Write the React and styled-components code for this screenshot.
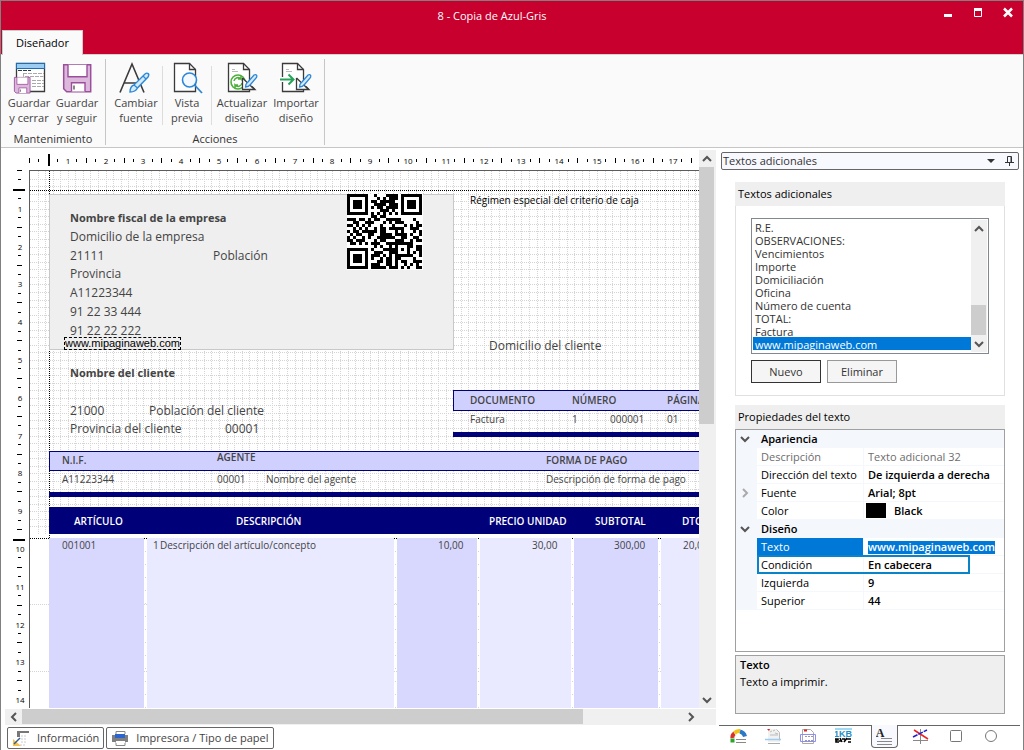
import React, { useEffect, useRef, useState } from "react";
import styled, { createGlobalStyle, css } from "styled-components";

const GlobalStyle = createGlobalStyle`
    * {
        box-sizing: border-box;
    }
    body {
        margin: 0;
        background: #fff;
        color: #333;
        font-family: "Open Sans", "Noto Sans", sans-serif;
        font-size: 11px;
        line-height: 16px;
    }
    button, input, select {
        font: inherit;
        color: inherit;
    }
`

const CM = 37.8;

const qrRows = [
    "1111111001000111101111111",
    "1000001000101011101000001",
    "1011101011011111001011101",
    "1011101001111011101011101",
    "1011101010110111101011101",
    "1000001000011101001000001",
    "1111111010101010101111111",
    "0000000011011000000000000",
    "1110110101100111110000100",
    "0011001110001010111000010",
    "1101010100010001000101011",
    "0010101001011011111001110",
    "1011011111011000101000101",
    "0101100110011110111101001",
    "1010010100111111001100110",
    "1101110001011000111001011",
    "0110101011100111111111000",
    "0000000001010010100011011",
    "1111111010001111101010011",
    "1000001001110011100010101",
    "1011101011101010111111001",
    "1011101010010110110000100",
    "1011101000110110101100111",
    "1000001011100110100101010",
    "1111111011111011101010011",
];

// x, y: coordenadas sobre el papel
const boxes = [
    { x: 19, y: 23, w: 405, h: 156, kind: "panel" },
    { x: 423, y: 219, w: 400, h: 21, kind: "band" },
    { x: 423, y: 261, w: 400, h: 5, kind: "solid" },
    { x: 19, y: 280, w: 800, h: 20, kind: "band" },
    { x: 19, y: 321, w: 800, h: 5, kind: "solid" },
    { x: 19, y: 336, w: 800, h: 27, kind: "solid" },
    { x: 19, y: 367, w: 95, h: 600, kind: "dark" },
    { x: 117, y: 367, w: 247, h: 600, kind: "light" },
    { x: 367, y: 367, w: 80, h: 600, kind: "dark" },
    { x: 450, y: 367, w: 91, h: 600, kind: "light" },
    { x: 544, y: 367, w: 84, h: 600, kind: "dark" },
    { x: 631, y: 367, w: 91, h: 600, kind: "light" },
];

const texts = [
    { x: 40, y: 39, t: "Nombre fiscal de la empresa", bold: true },
    { x: 40, y: 58, t: "Domicilio de la empresa" },
    { x: 40, y: 77, t: "21111" },
    { x: 183, y: 77, t: "Población" },
    { x: 40, y: 95, t: "Provincia" },
    { x: 40, y: 114, t: "A11223344" },
    { x: 40, y: 133, t: "91 22 33 444" },
    { x: 40, y: 152, t: "91 22 22 222" },
    { x: 440, y: 21, t: "Régimen especial del criterio de caja", small: true, color: "#000" },
    { x: 459, y: 167, t: "Domicilio del cliente" },
    { x: 40, y: 194, t: "Nombre del cliente", bold: true },
    { x: 40, y: 232, t: "21000" },
    { x: 119, y: 232, t: "Población del cliente" },
    { x: 40, y: 250, t: "Provincia del cliente" },
    { x: 195, y: 250, t: "00001" },
    { x: 440, y: 221, t: "DOCUMENTO", small: true, bold: true },
    { x: 542, y: 221, t: "NÚMERO", small: true, bold: true },
    { x: 637, y: 221, t: "PÁGINA", small: true, bold: true },
    { x: 440, y: 240, t: "Factura", small: true },
    { x: 542, y: 240, t: "1", small: true },
    { x: 580, y: 240, t: "000001", small: true },
    { x: 637, y: 240, t: "01", small: true },
    { x: 32, y: 281, t: "N.I.F.", small: true, bold: true },
    { x: 187, y: 278, t: "AGENTE", small: true, bold: true },
    { x: 516, y: 281, t: "FORMA DE PAGO", small: true, bold: true },
    { x: 32, y: 300, t: "A11223344", small: true },
    { x: 187, y: 300, t: "00001", small: true },
    { x: 236, y: 300, t: "Nombre del agente", small: true },
    { x: 516, y: 300, t: "Descripción de forma de pago", small: true },
    { x: 44, y: 342, t: "ARTÍCULO", small: true, bold: true, color: "#fff" },
    { x: 206, y: 342, t: "DESCRIPCIÓN", small: true, bold: true, color: "#fff" },
    { x: 459, y: 342, t: "PRECIO UNIDAD", small: true, bold: true, color: "#fff" },
    { x: 565, y: 342, t: "SUBTOTAL", small: true, bold: true, color: "#fff" },
    { x: 652, y: 342, t: "DTO.", small: true, bold: true, color: "#fff" },
    { x: 32, y: 366, t: "001001", small: true },
    { x: 123, y: 366, t: "1", small: true },
    { x: 130, y: 366, t: "Descripción del artículo/concepto", small: true },
    { x: 408, y: 366, t: "10,00", small: true },
    { x: 502, y: 366, t: "30,00", small: true },
    { x: 584, y: 366, t: "300,00", small: true },
    { x: 653, y: 366, t: "20,00", small: true },
];

const listItems = [
    "R.E.", "OBSERVACIONES:", "Vencimientos", "Importe", "Domiciliación",
    "Oficina", "Número de cuenta", "TOTAL:", "Factura", "www.mipaginaweb.com",
];

// tamaño visible de un elemento
function useSize() {
    const ref = useRef(null);
    const [size, setSize] = useState({ width: 0, height: 0 });

    useEffect(() => {
        const observer = new ResizeObserver(([entry]) => {
            setSize({ width: entry.contentRect.width, height: entry.contentRect.height });
        });
        observer.observe(ref.current);
        return () => observer.disconnect();
    }, []);

    return [ref, size];
}

/* ---------- iconos ---------- */

const Chevron = ({ dir, color = "#555" }) => {
    const d = {
        up: "M1 7 L5 3 L9 7",
        down: "M1 3 L5 7 L9 3",
        left: "M7 1 L3 5 L7 9",
        right: "M3 1 L7 5 L3 9",
    }[dir];
    return (
        <svg width="10" height="10" viewBox="0 0 10 10">
            <path d={d} fill="none" stroke={color} strokeWidth="2" />
        </svg>
    )
}

const Floppy = () => (
    <>
        <path d="M.7.7h27v27h-24l-3-3z" fill="#dcb8dc" stroke="#9b4f9b" strokeWidth="1.500" />
        <path d="M5 .7v12h19V.7M8.500 27.500v-8.800h13.500v8.800" fill="#fff" stroke="#9b4f9b" strokeWidth="1.400" />
        <path d="M11 21.500v4" stroke="#555" strokeWidth="1.400" />
    </>
)

const Page = () => (
    <>
        <path d="M5.500 2.500h15l6 6v22h-21z" fill="#fff" stroke="#3b3b3b" strokeWidth="1.300" />
        <path d="M20.500 2.500v6h6" fill="none" stroke="#3b3b3b" strokeWidth="1.300" />
    </>
)

const PenSquare = () => (
    <>
        <path d="M18.500 17v11.500H31l-3-3" fill="#fff" stroke="#3b3b3b" strokeWidth="1.300" />
        <path d="M18.500 17l12 11.500" stroke="#3b3b3b" strokeWidth="1.300" />
        <path d="M21.500 26c0-3 1-4 2.500-5l6-7c2-1 3.500 0 2.500 2.500l-6 7c-1.500 2-3 2.500-5 2.500z" fill="#d5eafa" stroke="#2b88d8" strokeWidth="1.300" />
    </>
)

const IconSaveClose = () => (
    <svg width="34" height="34" viewBox="0 0 34 34">
        <path d="M4.500 2.500h28v28h-28z" fill="#fff" stroke="#3b3b3b" strokeWidth="1.300" />
        <path d="M4.500 2.500h28v5h-28z" fill="#9bcdf2" stroke="#1b6fb8" />
        <path d="M6 9.500h4m1 0h4m1 0h3" stroke="#3b3b3b" />
        <path d="M11 12.500h21M11.500 12v3.500h20M20 19.500h12M20 22.500h12M20 25.500h12" fill="none" stroke="#aaa" strokeDasharray="4 1" />
        <g transform="translate(2 16) scale(.58)"><Floppy /></g>
    </svg>
)

const IconSave = () => (
    <svg width="34" height="34" viewBox="0 0 34 34">
        <g transform="translate(3 3)"><Floppy /></g>
    </svg>
)

const IconFont = () => (
    <svg width="34" height="34" viewBox="0 0 34 34">
        <path d="M1 31.500L13 3L25 31.500M5.500 22H21" fill="none" stroke="#3b3b3b" strokeWidth="1.600" />
        <path d="M11 31c0-4 1-6 4-7L26 13c2.500-2 5 0 3 3L18.500 27c-1.500 3-4 4-7.500 4z" fill="#d5eafa" stroke="#2b88d8" strokeWidth="1.400" />
        <path d="M15 24l3.500 3M24 15l3 3" stroke="#2b88d8" strokeWidth="1.200" />
    </svg>
)

const IconPreview = () => (
    <svg width="34" height="34" viewBox="0 0 34 34">
        <g transform="translate(-1 0)"><Page /></g>
        <circle cx="19.500" cy="19" r="7" fill="#f3f9fe" stroke="#2b88d8" strokeWidth="1.600" />
        <path d="M24.500 24l7.500 8" stroke="#2b88d8" strokeWidth="1.800" />
    </svg>
)

const IconRefresh = () => (
    <svg width="34" height="34" viewBox="0 0 34 34">
        <g transform="translate(-2 0)"><Page /></g>
        <path d="M7 8.500h3m-3 2h6" stroke="#bbb" />
        <circle cx="13" cy="21" r="7" fill="#fff" stroke="#4caf3c" strokeWidth="1.600" />
        <path d="M9 20a4 4 0 0 1 7-2v-3M16 18h-3M17 22a4 4 0 0 1-7 2v3M10 24h3" fill="none" stroke="#4caf3c" strokeWidth="1.500" />
        <g transform="translate(-1 0)"><PenSquare /></g>
    </svg>
)

const IconImport = () => (
    <svg width="34" height="34" viewBox="0 0 34 34">
        <g transform="translate(-2 0)"><Page /></g>
        <path d="M7 8.500h3m-3 2h6" stroke="#bbb" />
        <path d="M0 18.500h14" stroke="#fff" strokeWidth="5" />
        <path d="M1 18.500h13M9.500 13.500l5 5l-5 5" fill="none" stroke="#27a35a" strokeWidth="2" />
        <g transform="translate(-1 0)"><PenSquare /></g>
    </svg>
)

const IconInfo = () => (
    <svg width="18" height="18" viewBox="0 0 18 18">
        <path d="M5 2h12v2H8v4H5z" fill="#777" />
        <path d="M9 7h5m-5 3h5m-5 3h5M8 16h6" stroke="#ccc" strokeDasharray="2 1" />
        <path d="M1 10v7h8z" fill="#f6bf4f" />
        <path d="M2 15l6-6" stroke="#2f5f8f" strokeWidth="1.500" />
    </svg>
)

const IconPrinter = () => (
    <svg width="18" height="18" viewBox="0 0 18 18">
        <path d="M5 5V2.500h9V5M5 13v3.500h9V13" fill="#fff" stroke="#888" />
        <path d="M1 6h16v7H1z" fill="#808080" />
        <path d="M4 5h10v4H4z" fill="#2c63cf" />
        <path d="M5 12h9v2H5z" fill="#fff" />
    </svg>
)

const tabIcons = {
    Colores: (
        <>
            <path d="M2.500 14.500v-4" stroke="#2aa52a" strokeWidth="4" />
            <path d="M2.500 10Q2 7 4.500 5.500" stroke="#d9302a" strokeWidth="4" fill="none" />
            <path d="M4.500 5Q7 2.500 10 3" stroke="#f2c313" strokeWidth="4" fill="none" />
            <path d="M10 3.500q4 1 5 5" stroke="#2a78c8" strokeWidth="4" fill="none" />
            <path d="M6 11.500h10M6 14.500h10" stroke="#888" />
        </>
    ),
    Pie: (
        <>
            <path d="M3 1h9l3 3v10H3z" fill="#f1f1f1" />
            <path d="M2 1h3l-1 2z" fill="#d22" />
            <path d="M5 4l2-1M8 3l2-1M10 5l3 1M5 7h8" stroke="#bbb" />
            <path d="M11.500 1.500l3 3v8" fill="none" stroke="#bbb" />
            <path d="M0 11.500h16" stroke="#9fcdf0" strokeWidth="1.500" />
            <path d="M3 15.500h12" stroke="#aaa" />
        </>
    ),
    Documento: (
        <>
            <path d="M2.500 1.500h8l3 3v11h-11z" fill="#fff" stroke="#aaa" />
            <path d="M4 2.500h3" stroke="#d22" strokeWidth="2" />
            <path d="M5 8.500h8M5 12.500h8" stroke="#999" strokeDasharray="2 1" />
            <path d="M.500 6.500h15v7H.500z" fill="none" stroke="#8d8df5" />
        </>
    ),
    Variables: (
        <>
            <path d="M0 1h17" stroke="#41b4e6" />
            <text x="8" y="9" textAnchor="middle" fontFamily="Liberation Sans" fontWeight="700" fontSize="9" fill="#1f8fc4">1KB</text>
            <path d="M0 11h3v1H1v2h3M5 10l2 4M7 11h3M9 14l3-4M12 11h4M13 14h3M4 13h2" stroke="#000" strokeWidth="1.600" fill="none" />
        </>
    ),
    Textos: (
        <>
            <text x="4" y="9" textAnchor="middle" fontFamily="Liberation Serif" fontWeight="700" fontSize="12" fill="#222">A</text>
            <path d="M5 10.500h11M1 13.500h15M1 16.500h15" stroke="#888" />
        </>
    ),
    Lineas: (
        <>
            <path d="M8.500 1v15M1 12.500h15" stroke="#888" />
            <path d="M2 2l14 9" stroke="#e22" strokeWidth="1.500" />
            <path d="M1 9L15 2" stroke="#22c" strokeWidth="1.500" strokeDasharray="5 1" />
        </>
    ),
    Cuadros: <rect x="3.500" y="2.500" width="11" height="11" rx="1" fill="#fff" stroke="#777" />,
    Circulos: <circle cx="9" cy="8" r="5.500" fill="#fff" stroke="#777" />,
};

/* ---------- reglas y papel ---------- */

const HRuler = () => {
    const [ref, size] = useSize();
    const marks = [];
    for (let q = 0; q * CM / 4 < size.width - 8; q++) {
        const x = Math.round(q * CM / 4);
        if (q % 4 === 0 && q > 0) {
            marks.push(<text key={q} x={x + 1} y="16" textAnchor="middle" fontSize="8">{q / 4}</text>);
        } else if (q === 2) {
            marks.push(<rect key={q} x={x} y="6" width="2" height="12" />);
        } else {
            const tall = q % 2 === 0;
            marks.push(<rect key={q} x={x} y={tall ? 10 : 11} width="1" height={tall ? 5 : 3} />);
        }
    }
    return <RulerCell ref={ref}><RulerSvg width="100%" height="22">{marks}</RulerSvg></RulerCell>
}

const VRuler = () => {
    const [ref, size] = useSize();
    const marks = [];
    for (let q = 0; q * CM / 4 < size.height - 4; q++) {
        const y = Math.round(q * CM / 4);
        if (q % 4 === 0 && q > 0) {
            marks.push(<text key={q} x="19" y={y + 4} textAnchor="middle" fontSize="8">{q / 4}</text>);
        } else if (q === 2 || q === 39) {
            marks.push(<rect key={q} x="12" y={y} width="12" height="2" />);
        } else {
            const tall = q % 2 === 0;
            marks.push(<rect key={q} x={tall ? 16 : 17} y={y} width={tall ? 5 : 3} height="1" />);
        }
    }
    return <RulerCell ref={ref}><RulerSvg width="28" height="100%">{marks}</RulerSvg></RulerCell>
}

const PaperGrid = () => {
    const lines = [];
    for (let i = 1; i < 150; i++) {
        const p = Math.round(i * CM / 5) + 0.5;
        lines.push(<path key={"v" + i} d={`M${p} 0V363`} />);
        if (p < 363) lines.push(<path key={"h" + i} d={`M0 ${p}H1200`} />);
    }
    for (let y = 433; y < 1000; y += 67) {
        lines.push(<path key={"b" + y} d={`M0 ${y}.5H1200`} />);
    }
    for (const x of [115, 365, 448, 542, 629]) {
        lines.push(<path key={"g" + x} d={`M${x}.5 380V1000`} strokeDasharray="1 12" />);
    }
    return (
        <GridSvg width="100%" height="100%">
            <g stroke="#d4d4d4" strokeDasharray="1 1">{lines}</g>
            <g stroke="#000" strokeDasharray="1 1">
                <path d="M0 19.5H1200" />
                <path d="M19.5 0V367" />
                <path d="M0 367.5H1200" />
            </g>
        </GridSvg>
    )
}

const QrCode = () => (
    <QrSvg width="76" height="76" viewBox="0 0 76 76">
        <rect width="76" height="76" fill="#fff" />
        {qrRows.map((row, r) => row.split("").map((c, i) => (
            c === "1" ? <rect key={r + "-" + i} x={i * 3} y={r * 3} width="3" height="3" /> : null
        )))}
    </QrSvg>
)

function RibbonAction({ icon, lines, size }) {
    return (
        <RibbonButton type="button" $size={size}>
            {icon}
            <span>{lines[0]}<br />{lines[1]}</span>
        </RibbonButton>
    )
}

function App() {
    const [selected, setSelected] = useState("www.mipaginaweb.com");
    const [texto, setTexto] = useState("www.mipaginaweb.com");

    return (
        <Window>
            <GlobalStyle />
            <TitleBar>
                <Title>8 - Copia de Azul-Gris</Title>
                <WindowButtons>
                    <WindowButton type="button" aria-label="Minimizar">
                        <svg width="12" height="12"><rect x="2" y="7" width="8" height="3" fill="#fff" /></svg>
                    </WindowButton>
                    <WindowButton type="button" aria-label="Maximizar">
                        <svg width="12" height="12"><path d="M2.500 2v7.500h7V2" fill="none" stroke="#fff" /><rect x="2" y="1" width="8" height="3" fill="#fff" /></svg>
                    </WindowButton>
                    <WindowButton type="button" aria-label="Cerrar">
                        <svg width="12" height="12"><path d="M2 1.500l8 8M10 1.500l-8 8" stroke="#fff" strokeWidth="2.500" /></svg>
                    </WindowButton>
                </WindowButtons>
            </TitleBar>
            <TabRow>
                <RibbonTab type="button">Diseñador</RibbonTab>
            </TabRow>
            <Ribbon>
                <RibbonGroup>
                    <RibbonActions>
                        <RibbonAction icon={<IconSaveClose />} lines={["Guardar", "y cerrar"]} />
                        <RibbonAction icon={<IconSave />} lines={["Guardar", "y seguir"]} />
                    </RibbonActions>
                    <RibbonCaption>Mantenimiento</RibbonCaption>
                </RibbonGroup>
                <RibbonGroup>
                    <RibbonActions>
                        <RibbonAction icon={<IconFont />} lines={["Cambiar", "fuente"]} size="medium" />
                        <Divider />
                        <RibbonAction icon={<IconPreview />} lines={["Vista", "previa"]} />
                        <Divider />
                        <RibbonAction icon={<IconRefresh />} lines={["Actualizar", "diseño"]} size="large" />
                        <RibbonAction icon={<IconImport />} lines={["Importar", "diseño"]} />
                    </RibbonActions>
                    <RibbonCaption>Acciones</RibbonCaption>
                </RibbonGroup>
            </Ribbon>

            <Main>
                <Editor>
                    <Workspace>
                        <Corner />
                        <HRuler />
                        <VRuler />
                        <Paper>
                            <PaperGrid />
                            {boxes.map((b, i) => (
                                <PaperBox key={i} $x={b.x} $y={b.y} $w={b.w} $h={b.h} $kind={b.kind} />
                            ))}
                            <QrCode />
                            {texts.map((t, i) => (
                                <PaperText key={i} $x={t.x} $y={t.y} $small={t.small} $bold={t.bold} $color={t.color}>{t.t}</PaperText>
                            ))}
                            <SelectedText $x={34} $y={166}>{texto}</SelectedText>
                        </Paper>
                        <VScroll>
                            <ScrollButton type="button" aria-label="Subir"><Chevron dir="up" /></ScrollButton>
                            <Track><VThumb /></Track>
                            <ScrollButton type="button" aria-label="Bajar"><Chevron dir="down" /></ScrollButton>
                        </VScroll>
                        <HScroll>
                            <ScrollButton type="button" aria-label="Izquierda"><Chevron dir="left" /></ScrollButton>
                            <Track><HThumb /></Track>
                            <ScrollButton type="button" aria-label="Derecha"><Chevron dir="right" /></ScrollButton>
                        </HScroll>
                    </Workspace>
                    <Footer>
                        <FooterButton type="button"><IconInfo />Información</FooterButton>
                        <FooterButton type="button"><IconPrinter />Impresora / Tipo de papel</FooterButton>
                    </Footer>
                </Editor>

                <Dock>
                    <DockBody>
                        <DockTitle>
                            <span>Textos adicionales</span>
                            <DockButton type="button" aria-label="Menú">
                                <svg width="8" height="6"><path d="M0 1h8l-4 4z" fill="#333" /></svg>
                            </DockButton>
                            <DockButton type="button" aria-label="Anclar">
                                <svg width="9" height="10"><path d="M2.500 6V.500h4V6M0 6.500h9M4.500 7v3" fill="none" stroke="#333" /><path d="M6 1v5" stroke="#333" /></svg>
                            </DockButton>
                        </DockTitle>
                        <Groups>
                            <GroupTitle as="label" htmlFor="textos">Textos adicionales</GroupTitle>
                            <GroupBody>
                                <ListFrame>
                                    <ListBox id="textos" size={10} value={selected} onChange={(e) => { setSelected(e.target.value) }}>
                                        {listItems.map((item) => <option key={item}>{item}</option>)}
                                    </ListBox>
                                    <ListScroll>
                                        <ScrollButton type="button" aria-label="Subir lista"><Chevron dir="up" /></ScrollButton>
                                        <ListTrack><ListThumb /></ListTrack>
                                        <ScrollButton type="button" aria-label="Bajar lista"><Chevron dir="down" /></ScrollButton>
                                    </ListScroll>
                                </ListFrame>
                                <Buttons>
                                    <PushButton type="button" $primary>Nuevo</PushButton>
                                    <PushButton type="button">Eliminar</PushButton>
                                </Buttons>
                            </GroupBody>
                            <GroupTitle $spaced>Propiedades del texto</GroupTitle>
                            <PropFrame>
                                <PropTable>
                                    <colgroup>
                                        <GutterCol /><NameCol /><col />
                                    </colgroup>
                                    <tbody>
                                        <CategoryRow><td><Chevron dir="down" /></td><th colSpan={2} scope="rowgroup">Apariencia</th></CategoryRow>
                                        <PropRow $disabled><td /><th scope="row">Descripción</th><td>Texto adicional 32</td></PropRow>
                                        <PropRow><td /><th scope="row">Dirección del texto</th><td>De izquierda a derecha</td></PropRow>
                                        <PropRow><td><Chevron dir="right" color="#aaa" /></td><th scope="row">Fuente</th><td>Arial; 8pt</td></PropRow>
                                        <PropRow><td /><th scope="row">Color</th><td><Swatch />Black</td></PropRow>
                                        <CategoryRow><td><Chevron dir="down" /></td><th colSpan={2} scope="rowgroup">Diseño</th></CategoryRow>
                                        <PropRow $active>
                                            <td />
                                            <th scope="row"><label htmlFor="texto">Texto</label></th>
                                            <td><PropInput id="texto" value={texto} onChange={(e) => { setTexto(e.target.value) }} /></td>
                                        </PropRow>
                                        <PropRow $outlined><td /><th scope="row">Condición</th><td>En cabecera</td></PropRow>
                                        <PropRow><td /><th scope="row">Izquierda</th><td>9</td></PropRow>
                                        <PropRow><td /><th scope="row">Superior</th><td>44</td></PropRow>
                                    </tbody>
                                </PropTable>
                            </PropFrame>
                            <Help>
                                <strong>Texto</strong>
                                <span>Texto a imprimir.</span>
                            </Help>
                        </Groups>
                    </DockBody>
                    <DockTabs>
                        {Object.keys(tabIcons).map((name) => (
                            <DockTab key={name} type="button" aria-label={name} $active={name === "Textos"}>
                                <svg width="17" height="17" viewBox="0 0 17 17">{tabIcons[name]}</svg>
                            </DockTab>
                        ))}
                    </DockTabs>
                </Dock>
            </Main>
        </Window>
    )
}

const Window = styled.div`
    display: flex;
    flex-direction: column;
    min-height: 100vh;
    border: 1px solid #808080;
    border-bottom: 0;
    background: #fff;
`

const TitleBar = styled.header`
    display: flex;
    position: relative;
    justify-content: flex-end;
    height: 29px;
    background: #c8002d;
    color: #fff;
`
const Title = styled.h1`
    position: absolute;
    left: 0;
    right: 0;
    top: 7px;
    margin: 0 40px 0 0;
    text-align: center;
    font-size: 11px;
    font-weight: 400;
`
const WindowButtons = styled.div`
    display: flex;
    position: relative;
    gap: 18px;
    padding: 6px 9px 0 0;
`
const WindowButton = styled.button`
    width: 12px;
    height: 12px;
    padding: 0;
    border: 0;
    background: none;

    svg {
        display: block;
    }
`

const TabRow = styled.nav`
    display: flex;
    height: 24px;
    padding-left: 1px;
    background: #c8002d;
`
const RibbonTab = styled.button`
    height: 25px;
    padding: 0 13px;
    border: 1px solid #ccc;
    border-bottom: 0;
    background: #fafafa;
    color: #000;
    position: relative;
`

const Ribbon = styled.section`
    display: flex;
    padding: 4px 0 2px;
    border-top: 1px solid #d4d4d4;
    border-bottom: 1px solid #c6c6c6;
    background: #fafafa;
`
const RibbonGroup = styled.div`
    display: flex;
    flex-direction: column;
    border-right: 1px solid #c6c6c6;
    padding: 2px 4px 0;
`
const RibbonActions = styled.div`
    display: flex;
`

const ribbonWidths = { medium: "52px", large: "60px" };

const RibbonButton = styled.button`
    display: flex;
    flex-direction: column;
    align-items: center;
    width: ${(p) => ribbonWidths[p.$size] || "48px"};
    padding: 0;
    border: 0;
    background: none;
    line-height: 15px;
    white-space: nowrap;
    color: #444;
`
const Divider = styled.div`
    width: 1px;
    margin-top: 5px;
    background: #ddd;
`
const RibbonCaption = styled.div`
    padding-top: 8px;
    text-align: center;
    line-height: 12px;
`

const Main = styled.main`
    display: flex;
    flex: 1;
    min-height: 0;
`
const Editor = styled.section`
    display: flex;
    flex: 1;
    flex-direction: column;
    min-width: 0;
`
const Workspace = styled.div`
    display: grid;
    flex: 1;
    grid-template-columns: 28px minmax(0, 1fr) 17px;
    grid-template-rows: 22px minmax(0, 1fr) 17px;
`
const Corner = styled.div`
`
const RulerCell = styled.div`
    position: relative;
    overflow: hidden;
`
const RulerSvg = styled.svg`
    position: absolute;
    left: 0;
    top: 0;
    font-family: "Open Sans", sans-serif;
`
const Paper = styled.div`
    position: relative;
    overflow: hidden;
    border-left: 1px solid #5c5c5c;
    border-top: 1px solid #5c5c5c;
    color: #444;
`
const GridSvg = styled.svg`
    position: absolute;
    left: 0;
    top: 0;
    shape-rendering: crispEdges;
`
const QrSvg = styled.svg`
    position: absolute;
    left: 317px;
    top: 23px;
    shape-rendering: crispEdges;
`

const kinds = {
    panel: css`
        background: #efefef;
        border: 1px solid #c8c8c8;
    `,
    band: css`
        background: #d0d0ff;
        border: 1px solid #000078;
    `,
    solid: css`
        background: #000078;
    `,
    dark: css`
        background: #d8d8ff;
    `,
    light: css`
        background: #e9e9ff;
    `,
};

const PaperBox = styled.div`
    position: absolute;
    left: ${(p) => p.$x}px;
    top: ${(p) => p.$y}px;
    width: ${(p) => p.$w}px;
    height: ${(p) => p.$h}px;
    ${(p) => kinds[p.$kind]}
`
const PaperText = styled.span`
    position: absolute;
    left: ${(p) => p.$x}px;
    top: ${(p) => p.$y}px;
    white-space: nowrap;
    font-size: ${(p) => (p.$small ? "10px" : p.$bold ? "11px" : "12px")};
    font-weight: ${(p) => (p.$bold ? (p.$small ? 600 : 700) : 400)};
    color: ${(p) => p.$color || "inherit"};
`
const SelectedText = styled.span`
    position: absolute;
    left: ${(p) => p.$x}px;
    top: ${(p) => p.$y}px;
    border: 1px dashed #000;
    white-space: nowrap;
    font-family: "Liberation Sans", Arial, sans-serif;
    font-size: 11px;
    line-height: 11px;
    color: #000;
`

const VScroll = styled.div`
    display: flex;
    flex-direction: column;
    grid-column: 3;
    grid-row: 1 / 3;
    margin-top: 2px;
    padding-right: 2px;
    background: #f0f0f0;
`
const HScroll = styled.div`
    display: flex;
    grid-column: 1 / 4;
    grid-row: 3;
    margin-left: 4px;
    padding-right: 17px;
    border-top: 1px solid #fff;
    background: #f0f0f0;
`
const ScrollButton = styled.button`
    display: flex;
    flex: 0 0 17px;
    align-items: center;
    justify-content: center;
    padding: 0;
    border: 0;
    background: #f0f0f0;
`
const Track = styled.div`
    flex: 1;
`
const VThumb = styled.div`
    width: 15px;
    height: 49%;
    background: #cdcdcd;
`
const HThumb = styled.div`
    width: 85%;
    height: 15px;
    background: #cdcdcd;
`

const Footer = styled.footer`
    display: flex;
    gap: 2px;
    height: 25px;
    padding: 2px 0 1px 6px;
`
const FooterButton = styled.button`
    display: flex;
    align-items: center;
    gap: 7px;
    padding: 0 4px;
    border: 1px solid #666;
    border-radius: 2px;
    background: #fff;
    color: #444;
`

const Dock = styled.aside`
    display: flex;
    flex-direction: column;
    flex: 0 0 307px;
    padding: 4px 3px 0;
`
const DockBody = styled.div`
    flex: 1;
    display: flex;
    flex-direction: column;
    padding: 0 1px 11px 2px;
`
const DockTitle = styled.div`
    display: flex;
    align-items: center;
    gap: 10px;
    height: 18px;
    padding: 0 4px 0 1px;
    border: 1px solid #666;
    border-radius: 2px;
    background: #f8f8ff;

    span {
        flex: 1;
    }
`
const DockButton = styled.button`
    display: flex;
    padding: 0;
    border: 0;
    background: none;
`
const Groups = styled.div`
    display: flex;
    flex: 1;
    flex-direction: column;
    padding: 12px 14px 0;
`
const GroupTitle = styled.div`
    display: block;
    margin-top: ${(p) => (p.$spaced ? "9px" : "0")};
    padding: 4px 3px;
    background: #efefef;
    color: #000;
`
const GroupBody = styled.div`
    padding: 12px 15px;
    border: 1px solid #e0e0e0;
    border-top: 0;
`
const ListFrame = styled.div`
    display: flex;
    height: 136px;
    padding: 1px;
    border: 1px solid #828790;
`
const ListBox = styled.select`
    flex: 1;
    min-width: 0;
    margin: 0;
    padding: 0;
    border: 0;
    outline: 0;
    overflow: hidden;
    background: #fff;

    option {
        height: 13px;
        min-height: 13px;
        padding: 0 2px;
        line-height: 12px;
    }
    option:checked {
        background: linear-gradient(#0078d7, #0078d7);
        -webkit-text-fill-color: #fff;
    }
`
const ListScroll = styled.div`
    display: flex;
    flex-direction: column;
    flex: 0 0 16px;
    background: #f0f0f0;
`
const ListTrack = styled.div`
    display: flex;
    flex: 1;
    align-items: flex-end;
`
const ListThumb = styled.div`
    width: 15px;
    height: 31%;
    background: #cdcdcd;
`
const Buttons = styled.div`
    display: flex;
    gap: 6px;
    padding-top: 6px;
`
const PushButton = styled.button`
    width: 70px;
    height: 23px;
    padding: 0;
    border: 1px solid ${(p) => (p.$primary ? "#333" : "#999")};
    background: #f5f5f5;
`
const PropFrame = styled.div`
    flex: 1;
    border: 1px solid #a0a0a0;
`
const PropTable = styled.table`
    width: 100%;
    table-layout: fixed;
    border-collapse: collapse;
    color: #000;

    td, th {
        height: 18px;
        padding: 0 0 0 4px;
        text-align: left;
        font-weight: 600;
        white-space: nowrap;
    }
    td:first-child {
        background: #f4f7fc;
    }
    svg {
        display: block;
    }
`
const GutterCol = styled.col`
    width: 21px;
`
const NameCol = styled.col`
    width: 107px;
`
const CategoryRow = styled.tr`
    background: #f4f7fc;
`
const PropRow = styled.tr`
    color: ${(p) => (p.$disabled ? "#6d6d6d" : "#000")};

    th {
        font-weight: 400;
        box-shadow: inset -1px -1px #f4f7fc;
    }
    td:last-child {
        font-weight: ${(p) => (p.$disabled ? 400 : 600)};
        box-shadow: inset 0 -1px #f4f7fc;
    }
    ${(p) => p.$active && css`
        th {
            background: #0078d7;
            color: #fff;
        }
    `}
    ${(p) => p.$outlined && css`
        th {
            position: relative;
        }
        th::after {
            content: "";
            position: absolute;
            box-sizing: border-box;
            left: 0;
            top: -1px;
            width: 213px;
            height: 19px;
            border: 2px solid #0a84c8;
        }
    `}
`
const PropInput = styled.input`
    display: block;
    width: 127px;
    height: 13px;
    padding: 0;
    border: 0;
    background: #0078d7;
    color: #fff;
    font-weight: 600;
`
const Swatch = styled.span`
    display: inline-block;
    width: 20px;
    height: 15px;
    margin: 0 8px 0 -2px;
    vertical-align: top;
    background: #000;
`
const Help = styled.div`
    display: flex;
    flex-direction: column;
    height: 59px;
    margin-top: 3px;
    padding: 1px 4px;
    gap: 1px;
    border: 1px solid #a0a0a0;
    background: #efefef;
    color: #000;

    strong {
        font-weight: 600;
    }
`
const DockTabs = styled.div`
    display: flex;
    height: 25px;
    padding-left: 6px;
    gap: 8px;
    border-top: 1px solid #666;
`
const DockTab = styled.button`
    display: flex;
    align-items: center;
    justify-content: center;
    width: 27px;
    height: 23px;
    margin: -1px ${(p) => (p.$active ? "1px 0 6px" : "0 0")};
    padding: 0;
    border: 1px solid ${(p) => (p.$active ? "#666" : "transparent")};
    border-top: 0;
    border-radius: 0 0 4px 4px;
    background: ${(p) => (p.$active ? "#f8f8ff" : "none")};
`

export default App
